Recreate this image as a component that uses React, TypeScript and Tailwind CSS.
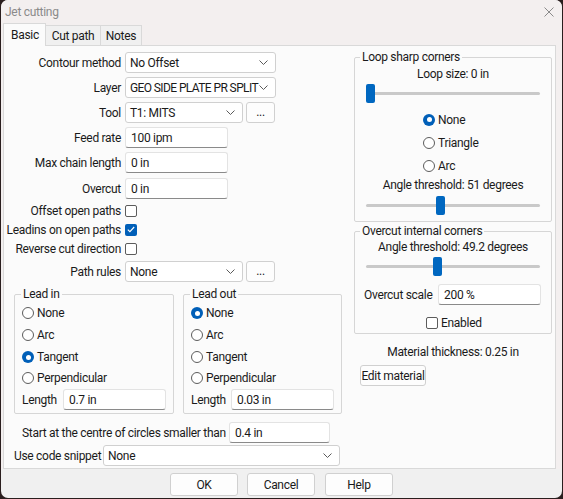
import React from "react";

const Chevron = () => (
  <svg width="9" height="5" viewBox="0 0 9 5" className="shrink-0">
    <path d="M0.5 0.5 L4.5 4.5 L8.5 0.5" fill="none" stroke="#5a5a5a" strokeWidth="1" />
  </svg>
);

function Select({ value, className, textClass }: { value: string; className: string; textClass?: string }) {
  return (
    <div
      className={`h-[21px] bg-white border border-[#d0d0d0] rounded-[3px] flex items-center justify-between pl-[4px] pr-[7px] ${className}`}
    >
      <span className={`whitespace-nowrap ${textClass ?? ""}`}>{value}</span>
      <Chevron />
    </div>
  );
}

function TextBox({ value, className }: { value: string; className: string }) {
  return (
    <div
      className={`h-[21px] bg-white border border-[#e3e3e3] border-b-[#8a8a8a] rounded-[3px] flex items-center pl-[5px] ${className}`}
    >
      {value}
    </div>
  );
}

function Dots() {
  return (
    <div className="h-[21px] w-[29px] bg-[#fdfdfd] border border-[#d0d0d0] rounded-[3px] flex items-center justify-center leading-none pb-[2px]">
      ...
    </div>
  );
}

function Radio({ checked }: { checked?: boolean }) {
  return checked ? (
    <span className="w-[12px] h-[12px] rounded-full bg-[#005fb8] flex items-center justify-center shrink-0">
      <span className="w-[5px] h-[5px] rounded-full bg-white" />
    </span>
  ) : (
    <span className="w-[12px] h-[12px] rounded-full border border-[#5c5c5c] bg-white shrink-0" />
  );
}

function Check({ checked }: { checked?: boolean }) {
  return checked ? (
    <span className="w-[12px] h-[12px] rounded-[2px] bg-[#005fb8] flex items-center justify-center shrink-0">
      <svg width="8" height="7" viewBox="0 0 8 7">
        <path d="M0.8 3.6 L2.9 5.6 L7.2 1" fill="none" stroke="white" strokeWidth="1.1" />
      </svg>
    </span>
  ) : (
    <span className="w-[12px] h-[12px] rounded-[2px] border border-[#5c5c5c] bg-white shrink-0" />
  );
}

function Slider({ pos, className }: { pos: number; className: string }) {
  return (
    <div className={`relative h-[19px] ${className}`}>
      <div className="absolute left-0 right-0 top-[8px] h-[3px] bg-[#c9c9c9] rounded-full" />
      <div className="absolute top-0 w-[9px] h-[19px] bg-[#0067c0] rounded-[2px]" style={{ left: pos }} />
    </div>
  );
}

function RadioRow({ label, checked, h }: { label: string; checked?: boolean; h: string }) {
  return (
    <div className={`flex items-center gap-[3px] ${h}`}>
      <Radio checked={checked} />
      <span>{label}</span>
    </div>
  );
}

function LeadGroup({ title, sel, length }: { title: string; sel: number; length: string }) {
  const items = ["None", "Arc", "Tangent", "Perpendicular"];
  return (
    <fieldset className="border border-[#d6d6d6] rounded-[2px] pl-[7px] pr-[7px] pb-[3px]">
      <legend className="px-[2px] -ml-[1px] leading-[16px]">{title}</legend>
      {items.map((it, i) => (
        <RadioRow key={it} label={it} checked={i === sel} h={i === 3 ? "h-[20px]" : "h-[22px]"} />
      ))}
      <div className="flex items-center justify-between mt-[1px]">
        <span>Length</span>
        <TextBox value={length} className="w-[103px]" />
      </div>
    </fieldset>
  );
}

function FormRow({ label, children, className }: { label: string; children: React.ReactNode; className?: string }) {
  return (
    <div className={`flex items-center gap-[4px] ${className ?? ""}`}>
      <span className="w-[117px] text-right whitespace-nowrap">{label}</span>
      {children}
    </div>
  );
}

function CheckRow({ label, checked }: { label: string; checked?: boolean }) {
  return (
    <div className="flex items-center gap-[4px] h-[19px]">
      <span className="w-[117px] text-right whitespace-nowrap">{label}</span>
      <Check checked={checked} />
    </div>
  );
}

export default function App() {
  return (
    <div className="w-[563px] h-[499px] bg-[#2a1e1e] flex flex-col px-[1px] pb-[1px] font-[Roboto,sans-serif] text-[12px] tracking-[-0.3px] leading-[16px] text-[#1a1a1a]">
      <div className="flex-1 flex flex-col bg-[#f0f0f0] rounded-[7px] overflow-hidden">
        {/* title bar */}
        <div className="bg-[#f3efef]">
          <div className="h-[23px] flex items-center justify-between pl-[4px] pr-[8px]">
            <span className="text-[#8a8a8a]">Jet cutting</span>
            <svg width="10" height="10" viewBox="0 0 10 10">
              <path d="M0.5 0.5 L9.5 9.5 M9.5 0.5 L0.5 9.5" stroke="#8a8a8a" strokeWidth="1" />
            </svg>
          </div>
          {/* tabs */}
          <div className="h-[22px] flex items-end pl-[2px]">
            <div className="relative z-10 -mb-[1px] h-[23px] w-[43px] bg-[#fbfbfb] border-t border-l border-r border-[#d9d9d9] pl-[7px] flex items-center">
              Basic
            </div>
            <div className="h-[20px] w-[55px] bg-[#f0f0f0] border-t border-r border-[#d9d9d9] flex items-center justify-center">
              Cut path
            </div>
            <div className="h-[20px] w-[41px] bg-[#f0f0f0] border-t border-r border-[#d9d9d9] flex items-center justify-center">
              Notes
            </div>
          </div>
        </div>
        {/* pane */}
        <div className="bg-[#f3efef]">
          <div className="ml-[2px] mr-[6px] h-[424px] border border-[#d9d9d9] bg-[#fbfbfb] flex">
            {/* left column */}
            <div className="w-[349px] flex flex-col pt-[6px]">
              <FormRow label="Contour method">
                <Select value="No Offset" className="w-[151px]" />
              </FormRow>
              <FormRow label="Layer" className="mt-[4px]">
                <Select value="GEO SIDE PLATE PR SPLIT" className="w-[151px]" textClass="tracking-[-0.6px]" />
              </FormRow>
              <FormRow label="Tool" className="mt-[4px]">
                <div className="flex gap-[3px]">
                  <Select value="T1: MITS" className="w-[118px]" />
                  <Dots />
                </div>
              </FormRow>
              <FormRow label="Feed rate" className="mt-[4px]">
                <TextBox value="100 ipm" className="w-[103px]" />
              </FormRow>
              <FormRow label="Max chain length" className="mt-[4px]">
                <TextBox value="0 in" className="w-[103px]" />
              </FormRow>
              <FormRow label="Overcut" className="mt-[5px]">
                <TextBox value="0 in" className="w-[103px]" />
              </FormRow>
              <div className="mt-[2px] flex flex-col">
                <CheckRow label="Offset open paths" />
                <CheckRow label="Leadins on open paths" checked />
                <CheckRow label="Reverse cut direction" />
              </div>
              <FormRow label="Path rules" className="mt-[3px]">
                <div className="flex gap-[3px]">
                  <Select value="None" className="w-[118px]" />
                  <Dots />
                </div>
              </FormRow>
              <div className="mt-[4px] ml-[10px] flex gap-[9px]">
                <div className="w-[160px]">
                  <LeadGroup title="Lead in" sel={2} length="0.7 in" />
                </div>
                <div className="w-[159px]">
                  <LeadGroup title="Lead out" sel={0} length="0.03 in" />
                </div>
              </div>
              <div className="mt-[8px] pl-[18px] flex items-center gap-[9px]">
                <span className="w-[198px] whitespace-nowrap">Start at the centre of circles smaller than</span>
                <TextBox value="0.4 in" className="w-[101px]" />
              </div>
              <div className="mt-[2px] pl-[10px] flex items-center gap-[5px]">
                <span className="w-[84px] whitespace-nowrap">Use code snippet</span>
                <Select value="None" className="w-[237px]" />
              </div>
            </div>
            {/* right column */}
            <div className="flex-1 flex flex-col pt-[3px]">
              <fieldset className="ml-[1px] w-[198px] border border-[#d6d6d6] rounded-[2px] pb-[6px]">
                <legend className="ml-[5px] px-[2px] leading-[16px]">Loop sharp corners</legend>
                <div className="mt-[1px] h-[16px] text-center">Loop size: 0 in</div>
                <Slider pos={0} className="mt-[2px] mx-[11px]" />
                <div className="mt-[5px] pl-[68px] flex flex-col">
                  <RadioRow label="None" checked h="h-[23px]" />
                  <RadioRow label="Triangle" h="h-[23px]" />
                  <RadioRow label="Arc" h="h-[23px]" />
                </div>
                <div className="h-[16px] text-center">Angle threshold: 51 degrees</div>
                <Slider pos={70} className="mt-[3px] mx-[11px]" />
              </fieldset>
              <fieldset className="mt-[1px] ml-[1px] w-[198px] border border-[#d6d6d6] rounded-[2px] pb-[1px]">
                <legend className="ml-[5px] px-[2px] leading-[16px]">Overcut internal corners</legend>
                <div className="h-[16px] text-center">Angle threshold: 49.2 degrees</div>
                <Slider pos={67} className="mt-[2px] mx-[11px]" />
                <div className="mt-[8px] pl-[9px] flex items-center">
                  <span className="w-[74px] whitespace-nowrap">Overcut scale</span>
                  <TextBox value="200 %" className="w-[103px]" />
                </div>
                <div className="mt-[8px] h-[19px] pl-[71px] flex items-center gap-[3px]">
                  <Check />
                  <span>Enabled</span>
                </div>
              </fieldset>
              <div className="mt-[10px] w-[200px] h-[16px] text-center">Material thickness: 0.25 in</div>
              <div className="mt-[5px] ml-[7px] w-[66px] h-[21px] bg-[#fdfdfd] border border-[#d0d0d0] rounded-[3px] flex items-center justify-center whitespace-nowrap">
                Edit material
              </div>
            </div>
          </div>
        </div>
        {/* buttons */}
        <div className="flex-1 flex items-start pt-[4px] pl-[169px] gap-[9px]">
          <div className="w-[68px] h-[23px] bg-[#fdfdfd] border border-[#d0d0d0] rounded-[3px] flex items-center justify-center">OK</div>
          <div className="w-[68px] h-[23px] bg-[#fdfdfd] border border-[#d0d0d0] rounded-[3px] flex items-center justify-center">Cancel</div>
          <div className="ml-[1px] w-[68px] h-[23px] bg-[#fdfdfd] border border-[#d0d0d0] rounded-[3px] flex items-center justify-center">Help</div>
        </div>
      </div>
    </div>
  );
}
